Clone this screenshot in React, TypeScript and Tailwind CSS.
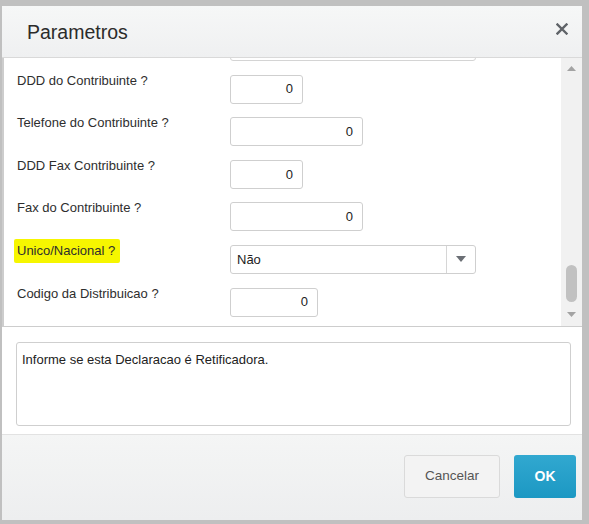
const font = { fontFamily: '"Liberation Sans", Arial, sans-serif' };

type Field = { label: string; kind: "num" | "select"; width: number; value: string; mark?: boolean };

const fields: Field[] = [
  { label: "DDD do Contribuinte ?", kind: "num", width: 73, value: "0" },
  { label: "Telefone do Contribuinte ?", kind: "num", width: 133, value: "0" },
  { label: "DDD Fax Contribuinte ?", kind: "num", width: 73, value: "0" },
  { label: "Fax do Contribuinte ?", kind: "num", width: 133, value: "0" },
  { label: "Unico/Nacional ?", kind: "select", width: 246, value: "Não", mark: true },
  { label: "Codigo da Distribuicao ?", kind: "num", width: 88, value: "0" },
];

const NumInput = ({ width, value }: { width: number; value: string }) => (
  <div
    className="h-[29px] rounded-[3px] border border-[#cfcfcf] bg-white flex items-center justify-end pr-[9px] text-[13px] text-[#222]"
    style={{ width }}
  >
    {value}
  </div>
);

const SelectBox = ({ width, value }: { width: number; value: string }) => (
  <div
    className="h-[29px] rounded-[3px] border border-[#cfcfcf] bg-white flex items-center text-[13px] text-[#222]"
    style={{ width }}
  >
    <span className="flex-1 pl-[6px]">{value}</span>
    <div className="w-[29px] h-full border-l border-[#d6d6d6] flex items-center justify-center">
      <svg width="10" height="6" viewBox="0 0 10 6">
        <path d="M0 0 L10 0 L5 6 Z" fill="#6b6f75" />
      </svg>
    </div>
  </div>
);

export default function App() {
  return (
    <div className="w-[589px] h-[524px] bg-[#c0c0c0] pt-[6px] pl-[2px] pr-[7px] pb-[4px]" style={font}>
      <div className="h-full flex flex-col bg-white">
        {/* header */}
        <div className="h-[52px] shrink-0 flex items-center justify-between bg-gradient-to-b from-[#f6f7f7] to-[#eff0f1] border-b border-[#d9d9d9] pl-[25px] pr-[14px]">
          <span className="text-[19.5px] text-[#2b2b2b] mt-[2px]">Parametros</span>
          <svg width="12" height="12" viewBox="0 0 12 12" className="mt-[-6px]">
            <path d="M1.5 1.5 L10.5 10.5 M10.5 1.5 L1.5 10.5" stroke="#5f6368" strokeWidth="2.4" strokeLinecap="square" />
          </svg>
        </div>

        {/* scroll area */}
        <div className="h-[269px] shrink-0 flex border-l-2 border-b border-[#cdcdcd]">
          <div className="flex-1 overflow-hidden">
            <div className="flex flex-col gap-[13.6px] mt-[-26px] text-[13px] text-[#2e2e2e]">
              <div className="flex">
                <div className="w-[226px]" />
                <div className="w-[246px] h-[29px] rounded-[3px] border border-[#d4d4d4]" />
              </div>
              {fields.map((f) => (
                <div key={f.label} className="flex items-start">
                  <div className="w-[226px] pl-[13px] leading-[14px] mt-[-1px]">
                    {f.mark ? (
                      <span className="inline-block bg-[#f6f600] pl-[3px] pr-[5px] py-[5px] ml-[-3px] mt-[-5px] rounded-[2px]">
                        {f.label}
                      </span>
                    ) : (
                      f.label
                    )}
                  </div>
                  {f.kind === "num" ? (
                    <NumInput width={f.width} value={f.value} />
                  ) : (
                    <SelectBox width={f.width} value={f.value} />
                  )}
                </div>
              ))}
            </div>
          </div>
          {/* scrollbar */}
          <div className="w-[21px] bg-[#f1f1f1] flex flex-col items-center pt-[8px] pb-[9px]">
            <svg width="9" height="5" viewBox="0 0 9 5">
              <path d="M0 5 L9 5 L4.5 0 Z" fill="#a3a3a3" />
            </svg>
            <div className="flex-1" />
            <div className="w-[11px] h-[37px] rounded-full bg-[#c1c1c1]" />
            <div className="h-[10px]" />
            <svg width="9" height="5" viewBox="0 0 9 5">
              <path d="M0 0 L9 0 L4.5 5 Z" fill="#a3a3a3" />
            </svg>
          </div>
        </div>

        {/* help */}
        <div className="flex-1 pt-[15px] pl-[14px] pr-[11px] pb-[8px]">
          <div className="h-full rounded-[3px] border border-[#cfcfcf] px-[5px] pt-[7px] text-[13px] text-[#222]">
            Informe se esta Declaracao é Retificadora.
          </div>
        </div>

        {/* footer */}
        <div className="h-[86px] shrink-0 border-t border-[#e2e2e2] bg-gradient-to-b from-[#f4f5f5] to-[#edeeef] flex justify-end items-start gap-[14px] pt-[20px] pr-[6px]">
          <button className="w-[96px] h-[43px] rounded-[3px] border border-[#dadada] bg-[#f3f3f3] text-[13.5px] text-[#555]">
            Cancelar
          </button>
          <button className="w-[62px] h-[43px] rounded-[3px] bg-gradient-to-b from-[#31a8d0] to-[#1b98c3] text-[14px] font-bold text-white">
            OK
          </button>
        </div>
      </div>
    </div>
  );
}
